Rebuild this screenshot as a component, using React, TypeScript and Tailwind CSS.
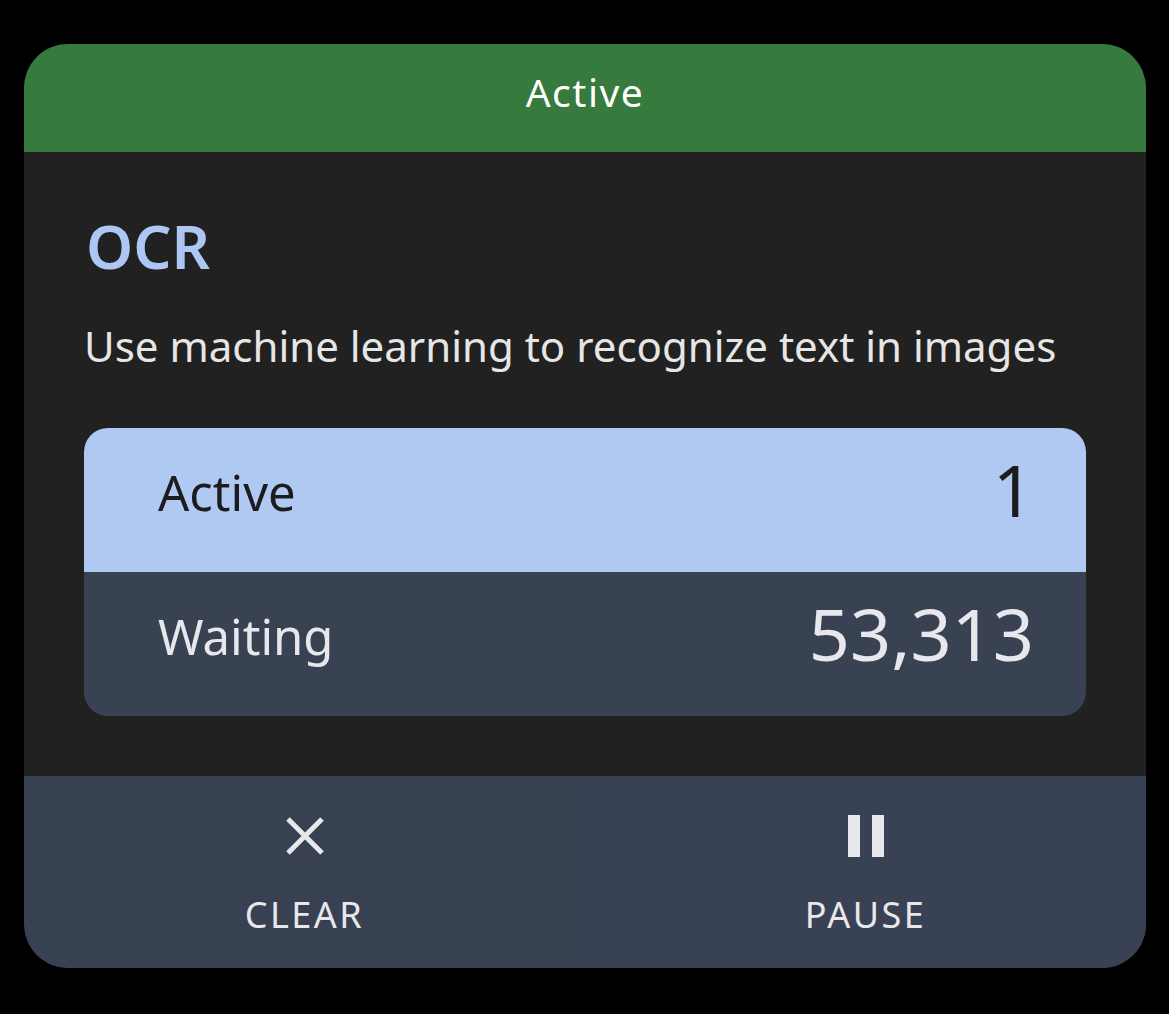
import React from "react";

export default function App() {
  const font = { fontFamily: '"Noto Sans", "Open Sans", sans-serif' };
  return (
    <div className="w-[1169px] h-[1014px] bg-black pt-[44px] px-[24px]" style={font}>
      <div className="w-[1122px] h-[924px] rounded-[44px] overflow-hidden flex flex-col bg-[#212121]">
        <div className="h-[108px] bg-[#367a3e] flex items-center justify-center text-white">
          <span className="text-[39px] tracking-[1.5px] mb-[12px]">Active</span>
        </div>
        <div className="flex-1 px-[60px] pt-[58px] flex flex-col">
          <div className="text-[60px] leading-[72px] font-semibold text-[#aec6f4] pl-[2px]">OCR</div>
          <div className="mt-[36px] text-[42px] leading-[56px] text-[#e6e6e6]">
            Use machine learning to recognize text in images
          </div>
          <div className="mt-[54px] rounded-[24px] overflow-hidden">
            <div className="h-[144px] bg-[#b0c9f3] flex items-center justify-between pl-[74px] pr-[52px] text-[#1c1c1c]">
              <span className="text-[49px] mb-[14px]">Active</span>
              <span className="text-[72px] mb-[22px]">1</span>
            </div>
            <div className="h-[144px] bg-[#394253] flex items-center justify-between pl-[74px] pr-[52px] text-[#e8e8ec]">
              <span className="text-[49px] mb-[14px]">Waiting</span>
              <span className="text-[72px] mb-[22px]">53,313</span>
            </div>
          </div>
        </div>
        <div className="h-[192px] grid grid-cols-2 bg-[#384152]">
          <div className="flex flex-col items-center pt-[39px] gap-[36px] text-[#e8e8ec]">
            <svg width="42" height="42" viewBox="0 0 42 42">
              <path d="M4 4 L38 38 M38 4 L4 38" stroke="#e8e8ec" strokeWidth="5" />
            </svg>
            <span className="text-[36px] leading-[44px] tracking-[2.5px]">CLEAR</span>
          </div>
          <div className="flex flex-col items-center pt-[39px] gap-[36px] text-[#e8e8ec] bg-[#394254]">
            <svg width="42" height="42" viewBox="0 0 42 42">
              <rect x="3" y="0" width="12" height="42" fill="#e8e8ec" />
              <rect x="27" y="0" width="12" height="42" fill="#e8e8ec" />
            </svg>
            <span className="text-[36px] leading-[44px] tracking-[2.5px]">PAUSE</span>
          </div>
        </div>
      </div>
    </div>
  );
}
